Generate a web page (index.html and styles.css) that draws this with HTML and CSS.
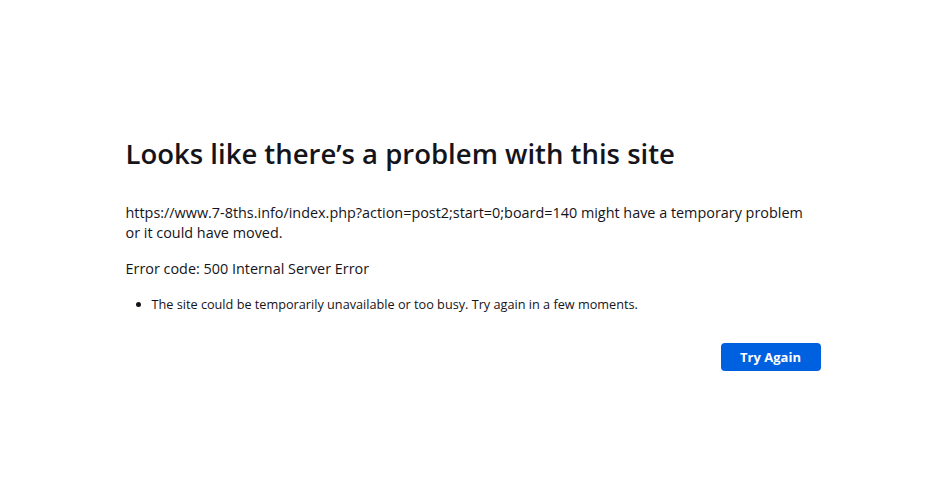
FILE: index.html
```html
<!DOCTYPE html>
<html>
<head>
    <title>Problem loading page</title>
    <link rel="stylesheet" href="styles.css">
</head>
<body>
    <div class="container">
        <h1 class="title">Looks like there’s a problem with this site</h1>
        <p class="desc">https://www.7-8ths.info/index.php?action=post2;start=0;board=140 might have a temporary problem or it could have moved.</p>
        <p class="code">Error code: 500 Internal Server Error</p>
        <ul class="hints">
            <li>The site could be temporarily unavailable or too busy. Try again in a few moments.</li>
        </ul>
        <div class="actions">
            <button class="retry">Try Again</button>
        </div>
    </div>
</body>
</html>
```

FILE: styles.css
```css
body {
    margin: 0;
    height: 100vh;
    display: flex;
    justify-content: center;
    font-family: "Open Sans", "Noto Sans", sans-serif;
    background: #fff;
    color: #15141a;
}
.container {
    width: 695px;
    padding-top: 136px;
}
.title {
    margin: 0 0 31px;
    font-size: 27.5px;
    font-weight: 600;
    line-height: 1.3;
}
.desc {
    margin: 0 0 16px;
    font-size: 14.4px;
    line-height: 20px;
}
.code {
    margin: 0 0 16px;
    font-size: 14.4px;
    line-height: 20px;
}
.hints {
    margin: 0;
    padding-left: 26px;
    font-size: 12.7px;
    line-height: 18px;
}
.actions {
    display: flex;
    justify-content: flex-end;
    margin-top: 30px;
}
.retry {
    width: 100px;
    height: 28px;
    border: none;
    border-radius: 4px;
    background: #0061e0;
    color: #fff;
    font-family: inherit;
    font-size: 13px;
    font-weight: 700;
    cursor: pointer;
}
```
